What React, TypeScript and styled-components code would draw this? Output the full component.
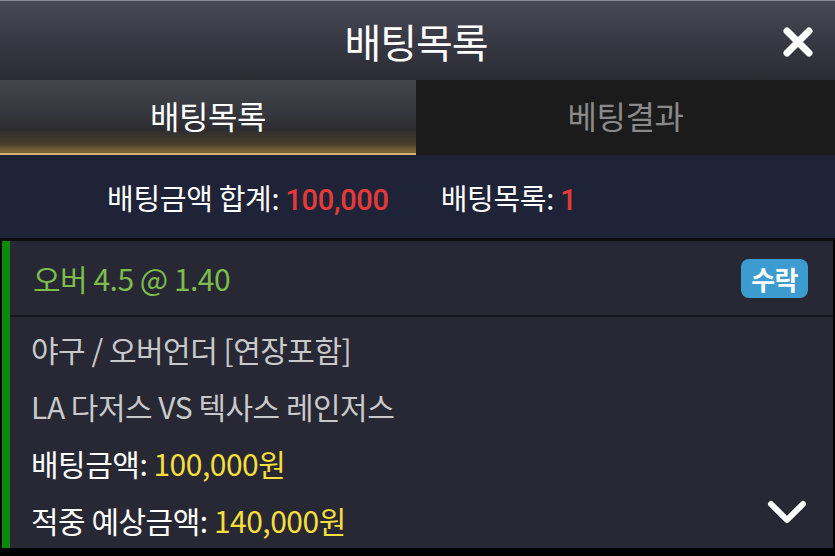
import React from "react";
import styled, { createGlobalStyle } from "styled-components";

const GlobalStyle = createGlobalStyle`
  html, body {
    margin: 0;
    padding: 0;
    background: #000;
  }
  body {
    font-family: "Noto Sans CJK KR", "Noto Sans", sans-serif;
  }
  svg {
    display: block;
  }
`;

const Panel = styled.div`
  width: 835px;
  height: 556px;
  background: #000;
  display: flex;
  flex-direction: column;
  overflow: hidden;
`;

const Header = styled.div`
  height: 80px;
  flex-shrink: 0;
  border-top: 1px solid #8a8a94;
  box-sizing: border-box;
  background: linear-gradient(to bottom, #4b4b58 0%, #3a3a46 45%, #2b2b34 100%);
  display: flex;
  align-items: center;
  justify-content: center;
  position: relative;
`;

const Title = styled.div`
  color: #fff;
  font-size: 40px;
  line-height: 1;
  letter-spacing: -1px;
  margin-left: -3px;
`;

const CloseBtn = styled.div`
  position: absolute;
  right: 21px;
  top: 25px;
  width: 32px;
  height: 32px;
`;

const Tabs = styled.div`
  display: flex;
  height: 75px;
  flex-shrink: 0;
`;

const Tab = styled.div<{ $active?: boolean }>`
  flex: ${(p) => (p.$active ? "0 0 416px" : "1")};
  display: flex;
  align-items: center;
  justify-content: center;
  box-sizing: border-box;
  padding-bottom: 4px;
  font-size: 32px;
  letter-spacing: -0.5px;
  color: ${(p) => (p.$active ? "#fff" : "#8a8a8a")};
  background: ${(p) =>
    p.$active
      ? "linear-gradient(to bottom, #46464f 0%, #36363e 45%, #2c2c30 68%, #4a3f2c 88%, #7a6234 97%)"
      : "#1b1b1b"};
  border-bottom: ${(p) => (p.$active ? "2px solid #d6b476" : "2px solid #1b1b1b")};
`;

const Summary = styled.div`
  height: 83px;
  flex-shrink: 0;
  background: #1f2338;
  display: flex;
  align-items: center;
  padding-left: 107px;
  gap: 52px;
  font-size: 29px;
  color: #fff;
  letter-spacing: -0.3px;
  border-bottom: 3px solid #0b0b10;
`;

const Red = styled.span`
  color: #e53a3a;
  font-family: Roboto, "Noto Sans", sans-serif;
  font-weight: 500;
`;

const Card = styled.div`
  height: 307px;
  flex-shrink: 0;
  margin-left: 2px;
  margin-right: 2px;
  background: #272833;
  border-left: 8px solid #0b8a0b;
  display: flex;
  flex-direction: column;
`;

const CardHead = styled.div`
  height: 74px;
  flex-shrink: 0;
  display: flex;
  align-items: center;
  justify-content: space-between;
  padding: 0 25px 0 23px;
  border-bottom: 2px solid #17171d;
`;

const Pick = styled.div`
  color: #7cbd4c;
  font-size: 30px;
  letter-spacing: -0.5px;
`;

const Badge = styled.div`
  background: #3d9ccf;
  color: #fff;
  font-size: 26px;
  font-weight: 700;
  border-radius: 8px;
  padding: 0 10px;
  height: 39px;
  line-height: 39px;
  letter-spacing: -0.5px;
`;

const CardBody = styled.div`
  flex: 1;
  min-height: 0;
  display: flex;
  flex-direction: column;
  padding: 16px 0 0 21px;
  position: relative;
`;

const Line = styled.div<{ $muted?: boolean }>`
  flex-shrink: 0;
  height: 57px;
  line-height: 32px;
  font-size: 30px;
  letter-spacing: -0.5px;
  color: ${(p) => (p.$muted ? "#c9c9cc" : "#fff")};
`;

const Yellow = styled.span`
  color: #f4df3c;
`;

const Chevron = styled.div`
  position: absolute;
  right: 25px;
  bottom: 20px;
  width: 42px;
  height: 30px;
`;

export default function App() {
  return (
    <Panel>
      <GlobalStyle />
      <Header>
        <Title>배팅목록</Title>
        <CloseBtn>
          <svg width="32" height="32" viewBox="0 0 32 32">
            <path
              d="M5 5 L27 27 M27 5 L5 27"
              stroke="#fff"
              strokeWidth="7"
              strokeLinecap="round"
            />
          </svg>
        </CloseBtn>
      </Header>
      <Tabs>
        <Tab $active>배팅목록</Tab>
        <Tab>베팅결과</Tab>
      </Tabs>
      <Summary>
        <span>
          배팅금액 합계: <Red>100,000</Red>
        </span>
        <span>
          배팅목록: <Red>1</Red>
        </span>
      </Summary>
      <Card>
        <CardHead>
          <Pick>오버 4.5 @ 1.40</Pick>
          <Badge>수락</Badge>
        </CardHead>
        <CardBody>
          <Line $muted>야구 / 오버언더 [연장포함]</Line>
          <Line $muted>LA 다저스 VS 텍사스 레인저스</Line>
          <Line>
            배팅금액: <Yellow>100,000원</Yellow>
          </Line>
          <Line>
            적중 예상금액: <Yellow>140,000원</Yellow>
          </Line>
          <Chevron>
            <svg width="42" height="30" viewBox="0 0 42 30">
              <path
                d="M5 6 L21 22 L37 6"
                stroke="#fff"
                strokeWidth="6"
                strokeLinecap="round"
                strokeLinejoin="round"
                fill="none"
              />
            </svg>
          </Chevron>
        </CardBody>
      </Card>
    </Panel>
  );
}
